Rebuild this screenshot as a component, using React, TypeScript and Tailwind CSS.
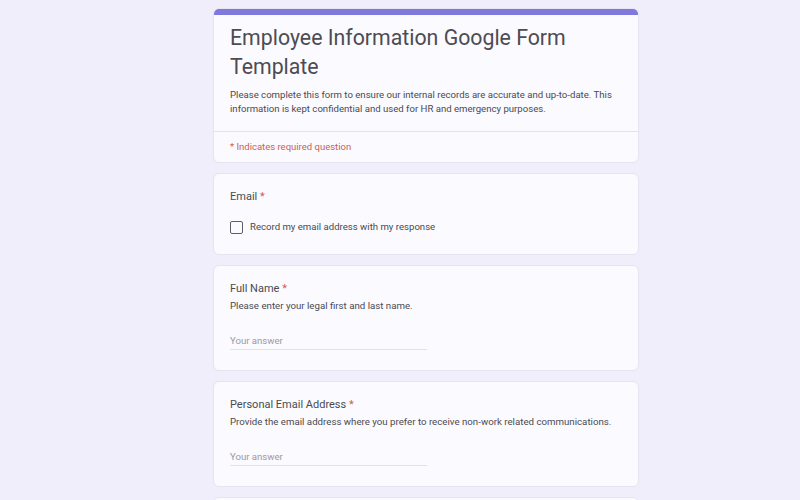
import React from "react";

function Question({ title, desc }: { title: string; desc: string }) {
  return (
    <div className="bg-[#fbfaff] rounded-[6px] border border-[#e6e3f3] px-[16px] pt-[14px] pb-[20px]">
      <div className="text-[11px] leading-[18px] text-[#4a4a4f]">
        {title} <span className="text-[#d05a55]">*</span>
      </div>
      <div className="text-[9.7px] leading-[16px] text-[#4a4a4f]">{desc}</div>
      <div className="mt-[20px] w-[197px] border-b border-[#e2e0ea] pb-[1px] text-[9.6px] leading-[14px] text-[#9a99a3]">
        Your answer
      </div>
    </div>
  );
}

export default function App() {
  return (
    <div
      className="min-h-[500px] h-[500px] overflow-hidden bg-[#f0eefb]"
      style={{ fontFamily: "Roboto, 'Noto Sans', sans-serif" }}
    >
      <div className="ml-[213px] w-[426px] pt-[8px] flex flex-col gap-[10px]">
        <div className="bg-[#fbfaff] rounded-[6px] border border-[#e6e3f3] overflow-hidden">
          <div className="h-[6px] bg-[#7f78dd]" />
          <div className="px-[16px] pt-[8px] pb-[16px]">
            <div className="text-[21.3px] leading-[29px] text-[#4d4c52]">
              Employee Information Google Form Template
            </div>
            <div className="mt-[7px] text-[9.6px] leading-[13.5px] text-[#4a4a4f]">
              Please complete this form to ensure our internal records are accurate and up-to-date. This
              information is kept confidential and used for HR and emergency purposes.
            </div>
          </div>
          <div className="border-t border-[#e4e2ec] px-[16px] pt-[8px] pb-[8px] text-[9.5px] leading-[14px] text-[#c8605a]">
            * Indicates required question
          </div>
        </div>

        <div className="bg-[#fbfaff] rounded-[6px] border border-[#e6e3f3] px-[16px] pt-[14px] pb-[20px]">
          <div className="text-[11px] leading-[18px] text-[#4a4a4f]">
            Email <span className="text-[#d05a55]">*</span>
          </div>
          <div className="mt-[14px] flex items-center gap-[7px]">
            <div className="w-[13px] h-[13px] rounded-[2px] border-[1.5px] border-[#5f5e66]" />
            <div className="text-[9.6px] leading-[14px] text-[#4a4a4f]">
              Record my email address with my response
            </div>
          </div>
        </div>

        <Question title="Full Name" desc="Please enter your legal first and last name." />
        <Question
          title="Personal Email Address"
          desc="Provide the email address where you prefer to receive non-work related communications."
        />
        <div className="bg-[#fbfaff] rounded-[6px] border border-[#e6e3f3] h-[100px]" />
      </div>
    </div>
  );
}
